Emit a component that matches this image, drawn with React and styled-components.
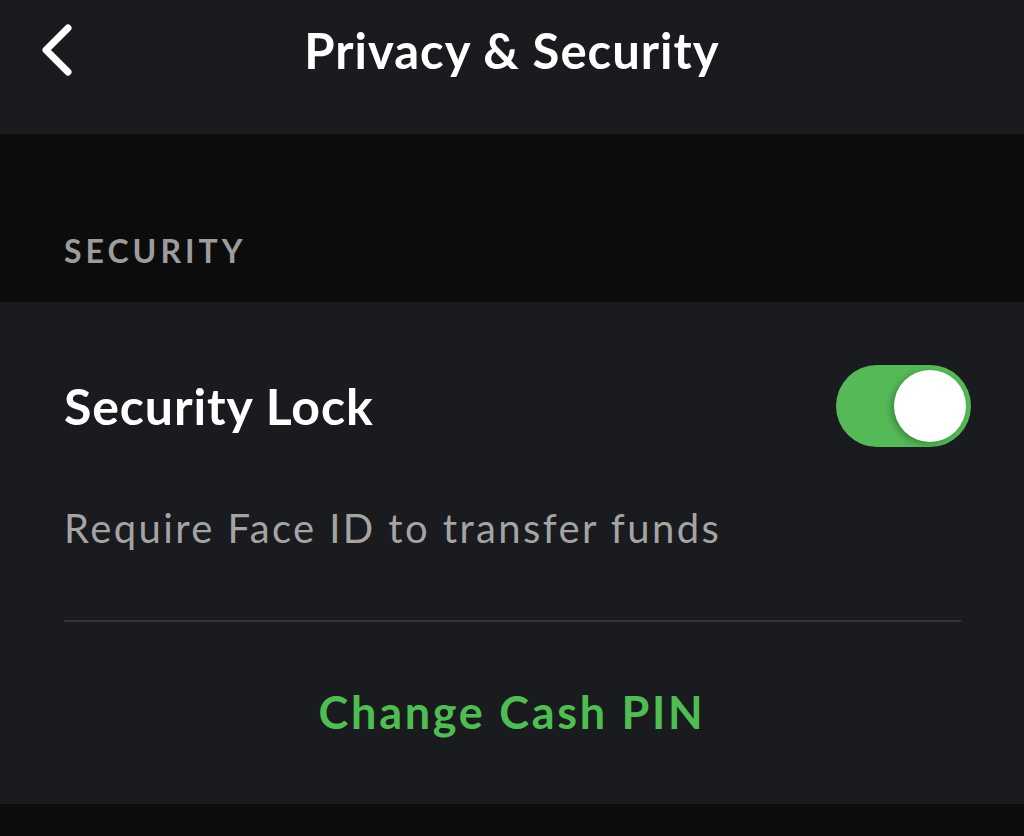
import React from "react";
import styled, { createGlobalStyle } from "styled-components";

const Global = createGlobalStyle`
  html, body { margin: 0; padding: 0; background: #0c0c0d; }
  body { font-family: Lato, "Open Sans", sans-serif; -webkit-font-smoothing: antialiased; }
`;

const Screen = styled.div`
  width: 1024px;
  height: 836px;
  display: flex;
  flex-direction: column;
  background: #0c0c0d;
  overflow: hidden;
`;

const Header = styled.header`
  height: 134px;
  background: #1a1b1e;
  display: grid;
  grid-template-columns: 120px 1fr 120px;
  align-items: start;
`;

const BackButton = styled.button`
  height: 100px;
  background: none;
  border: 0;
  padding: 0 0 0 40px;
  display: flex;
  align-items: center;
  cursor: pointer;
`;

const Title = styled.h1`
  margin: 0;
  height: 100px;
  display: flex;
  align-items: center;
  justify-content: center;
  color: #ffffff;
  font-size: 49px;
  font-weight: 700;
  letter-spacing: 1px;
`;

const SectionLabel = styled.div`
  height: 168px;
  box-sizing: border-box;
  padding: 0 64px 35px;
  display: flex;
  align-items: flex-end;
  color: #9c9c9c;
  font-size: 32px;
  font-weight: 700;
  letter-spacing: 4px;
  line-height: 32px;
`;

const Card = styled.section`
  background: #1a1b1e;
  display: flex;
  flex-direction: column;
  padding: 63px 53px 62px 64px;
`;

const ToggleRow = styled.div`
  display: flex;
  align-items: center;
  justify-content: space-between;
  height: 82px;
`;

const RowTitle = styled.span`
  color: #ffffff;
  font-size: 50px;
  font-weight: 700;
  letter-spacing: 0.9px;
`;

const Switch = styled.div`
  width: 135px;
  height: 82px;
  border-radius: 41px;
  background: #54b956;
  display: flex;
  align-items: center;
  justify-content: ${(p) => (p.$on ? "flex-end" : "flex-start")};
  padding: 0 5px;
  box-sizing: border-box;
`;

const Knob = styled.div`
  width: 72px;
  height: 72px;
  border-radius: 50%;
  background: #ffffff;
  box-shadow: -3px 2px 6px rgba(0, 0, 0, 0.25);
`;

const Description = styled.p`
  margin: 57px 0 0;
  color: #a4a4a4;
  font-size: 40px;
  line-height: 48px;
  letter-spacing: 2.4px;
`;

const Divider = styled.hr`
  margin: 68px 10px 0 0;
  border: 0;
  height: 2px;
  background: #343538;
`;

const Action = styled.button`
  margin: 60px 11px 0 0;
  background: none;
  border: 0;
  padding: 0;
  height: 60px;
  color: #4fbe52;
  font-family: inherit;
  font-size: 45px;
  font-weight: 700;
  letter-spacing: 2.7px;
  cursor: pointer;
`;

const Chevron = () => (
  <svg width="40" height="56" viewBox="0 0 40 56">
    <polyline
      points="28,6 6,28 28,50"
      fill="none"
      stroke="#ffffff"
      strokeWidth="7"
      strokeLinecap="round"
      strokeLinejoin="round"
    />
  </svg>
);

export default function App() {
  return (
    <Screen>
      <Global />
      <Header>
        <BackButton aria-label="Back">
          <Chevron />
        </BackButton>
        <Title>Privacy &amp; Security</Title>
        <div />
      </Header>
      <SectionLabel>SECURITY</SectionLabel>
      <Card>
        <ToggleRow>
          <RowTitle>Security Lock</RowTitle>
          <Switch $on>
            <Knob />
          </Switch>
        </ToggleRow>
        <Description>Require Face ID to transfer funds</Description>
        <Divider />
        <Action>Change Cash PIN</Action>
      </Card>
    </Screen>
  );
}
